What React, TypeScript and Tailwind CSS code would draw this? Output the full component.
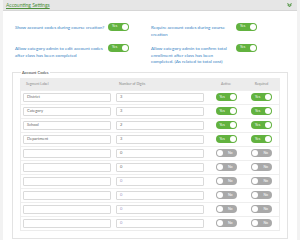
import React from 'react';

type Code = { label: string; digits: string; active: boolean; required: boolean; muted?: boolean };

const CODES: Code[] = [
  { label: 'District', digits: '3', active: true, required: true },
  { label: 'Category', digits: '3', active: true, required: true },
  { label: 'School', digits: '2', active: true, required: true },
  { label: 'Department', digits: '3', active: true, required: true },
  { label: '', digits: '0', active: false, required: false },
  { label: '', digits: '0', active: false, required: false },
  { label: '', digits: '0', active: false, required: false, muted: true },
  { label: '', digits: '0', active: false, required: false, muted: true },
  { label: '', digits: '0', active: false, required: false, muted: true },
  { label: '', digits: '0', active: false, required: false, muted: true },
];

const Toggle: React.FC<{ on: boolean }> = ({ on }) =>
  on ? (
    <div className="relative flex h-[8px] w-[21px] items-center rounded-full bg-[#62b23f] pl-[4px]">
      <span className="text-[3.5px] leading-none text-white">Yes</span>
      <span className="absolute right-[1px] top-[1px] h-[6px] w-[6px] rounded-full bg-white" />
    </div>
  ) : (
    <div className="relative flex h-[8px] w-[21px] items-center justify-end rounded-full bg-[#a9a9a9] pr-[4px]">
      <span className="text-[3.5px] leading-none text-white">No</span>
      <span className="absolute left-[1px] top-[1px] h-[6px] w-[6px] rounded-full bg-white" />
    </div>
  );

const Setting: React.FC<{ text: string; width: string }> = ({ text, width }) => (
  <div className="flex items-start">
    <p className={`${width} text-[4.6px] leading-[6.6px] text-[#3884c4]`}>{text}</p>
    <div className="ml-[2px] mt-[-1px]">
      <Toggle on />
    </div>
  </div>
);

const App: React.FC = () => {
  return (
    <div
      className="h-[240px] w-[300px] overflow-hidden bg-[#f2f2f2] px-[3px]"
      style={{ fontFamily: 'Lato, "Liberation Sans", sans-serif' }}
    >
      <div className="h-full bg-white">
        <header className="flex h-[11px] items-center justify-between border-b border-[#d6d6d6] bg-[#e6e6e6] pl-[3px] pr-[5px]">
          <span className="text-[5px] leading-none text-[#4c8f3a] underline">Accounting Settings</span>
          <svg width="5" height="4" viewBox="0 0 10 8">
            <path d="M1 1l4 3 4-3M1 4l4 3 4-3" fill="none" stroke="#3f8a2e" strokeWidth="2" />
          </svg>
        </header>

        <div className="grid grid-cols-[136px_1fr] gap-y-[8px] pl-[12px] pt-[13px]">
          <Setting width="w-[91px]" text="Show account codes during course creation?" />
          <Setting width="w-[83px]" text="Require account codes during course creation" />
          <Setting width="w-[91px]" text="Allow category admin to edit account codes after class has been completed" />
          <Setting
            width="w-[83px]"
            text="Allow category admin to confirm total enrollment after class has been completed. (As related to total cost)"
          />
        </div>

        <fieldset className="mx-[9px] mt-[6px] border border-[#e3e3e3] px-[7px] pb-[7px]">
          <legend className="ml-[1px] px-[1px] text-[4px] leading-none text-[#333]">Account Codes</legend>
          <div className="mt-[3px] border border-[#ececec]">
            <div className="grid h-[11px] grid-cols-[95px_92px_36px_1fr] items-center bg-[#ececec] text-[3.5px] text-[#8a8a8a]">
              <span className="pl-[5px]">Segment Label</span>
              <span className="pl-[3px]">Number of Digits</span>
              <span className="text-center">Active</span>
              <span className="text-center">Required</span>
            </div>
            {CODES.map((c, i) => (
              <div
                key={i}
                className="grid h-[14px] grid-cols-[95px_92px_36px_1fr] items-center border-t border-[#eeeeee]"
              >
                <div className="pl-[2px]">
                  <div className="flex h-[9px] w-[88px] items-center rounded-[1px] border border-[#dadada] pl-[3px] text-[4px] text-[#666]">
                    {c.label}
                  </div>
                </div>
                <div>
                  <div
                    className={`flex h-[9px] w-[88px] items-center rounded-[1px] border border-[#dadada] pl-[3px] text-[4px] ${
                      c.muted ? 'text-[#9a94c4]' : 'text-[#666]'
                    }`}
                  >
                    {c.digits}
                  </div>
                </div>
                <div className="flex justify-center">
                  <Toggle on={c.active} />
                </div>
                <div className="flex justify-center">
                  <Toggle on={c.required} />
                </div>
              </div>
            ))}
          </div>
        </fieldset>
      </div>
    </div>
  );
};

export default App;
